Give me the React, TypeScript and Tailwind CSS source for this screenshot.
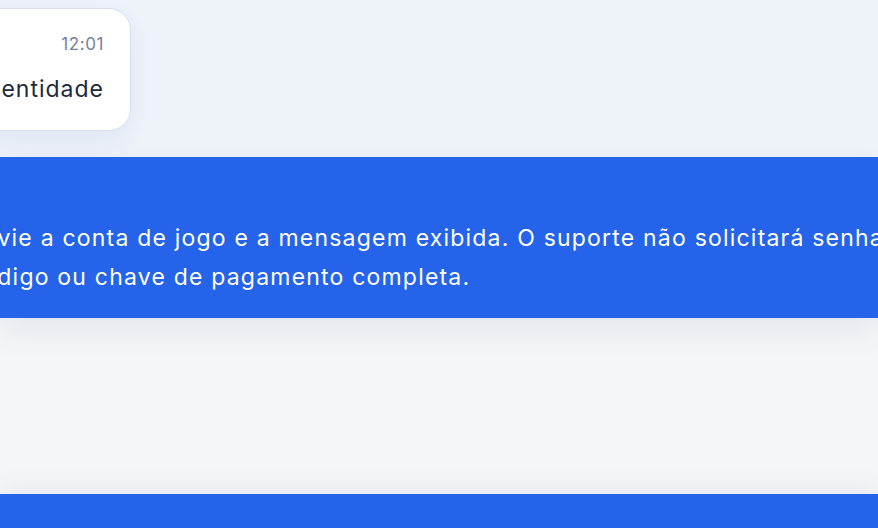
export default function App() {
  return (
    <div className="w-[878px] h-[528px] overflow-hidden bg-[#f3f5f9] font-['Inter',sans-serif] flex flex-col">
      {/* last message of the chat */}
      <div className="h-[157px] shrink-0 bg-[#eef2f9] pt-2">
        <div className="w-[300px] h-[123px] -ml-[169px] rounded-[22px] border border-[#d6dfed] bg-white shadow-[0_8px_24px_rgba(30,64,175,0.07)] flex flex-col items-end pt-[23px] pr-[26px]">
          <span className="text-[17px] leading-6 text-[#74829a] tracking-[0.6px]">12:01</span>
          <span className="mt-[17px] text-[23px] leading-8 text-[#1e293b] whitespace-nowrap tracking-[1px]">
            Verificação de identidade
          </span>
        </div>
      </div>

      {/* security notice */}
      <div className="relative z-10 h-[161px] shrink-0 bg-[#2563eb] shadow-[0_12px_32px_rgba(15,23,42,0.08)]">
        <p className="-ml-[32px] pt-[62px] text-[23px] leading-[39px] text-white whitespace-nowrap tracking-[1.2px]">
          Envie a conta de jogo e a mensagem exibida. O suporte não solicitará senha,
          <br />
          código ou chave de pagamento completa.
        </p>
      </div>

      <div className="h-[176px] shrink-0 bg-[#f4f6fa]" />

      <div className="relative z-10 h-[60px] shrink-0 bg-[#2563eb] shadow-[0_-8px_24px_rgba(15,23,42,0.05)]" />
    </div>
  );
}
